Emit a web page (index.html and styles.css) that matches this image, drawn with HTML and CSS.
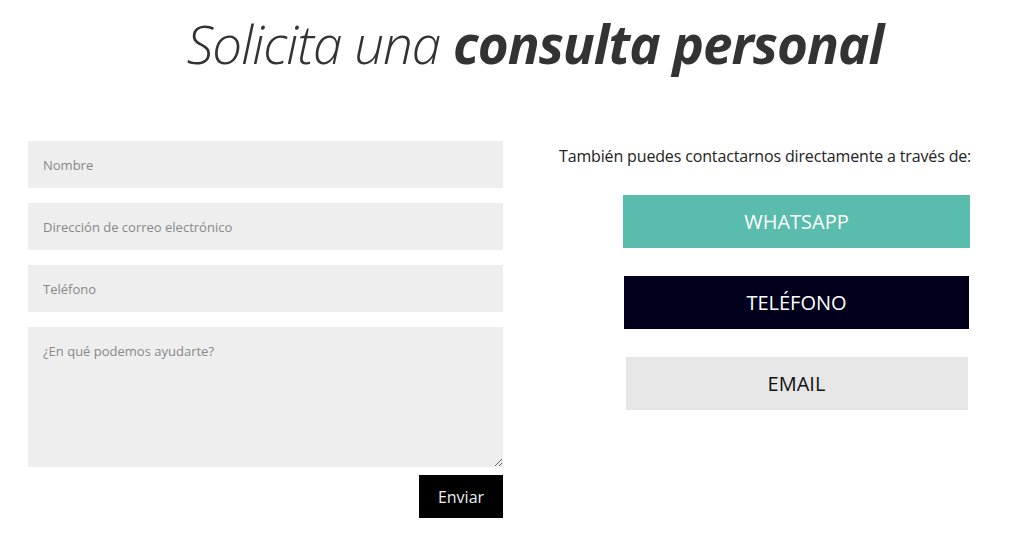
FILE: index.html
```html
<!DOCTYPE html>
<html lang="es">
<head>
<meta charset="utf-8">
<title>Solicita una consulta personal</title>
<link rel="stylesheet" href="styles.css">
</head>
<body>
<div class="page">
  <h1 class="title">Solicita una <strong>consulta personal</strong></h1>
  <div class="content">
    <form class="form">
      <input class="field" type="text" placeholder="Nombre">
      <input class="field" type="email" placeholder="Dirección de correo electrónico">
      <input class="field" type="tel" placeholder="Teléfono">
      <textarea class="field area" placeholder="¿En qué podemos ayudarte?"></textarea>
      <div class="actions"><button type="button" class="send">Enviar</button></div>
    </form>
    <div class="contact">
      <p class="lead">También puedes contactarnos directamente a través de:</p>
      <div class="buttons">
        <a class="btn btn-wa">WHATSAPP</a>
        <a class="btn btn-tel">TELÉFONO</a>
        <a class="btn btn-mail">EMAIL</a>
      </div>
    </div>
  </div>
</div>
</body>
</html>
```
FILE: styles.css
```css
html, body {
  margin: 0;
  padding: 0;
  background: #fff;
  overflow: hidden;
}
.page {
  width: 1024px;
  height: 545px;
  font-family: "Open Sans", "Noto Sans", sans-serif;
}
.title {
  margin: 0;
  padding: 10px 0 0 46px;
  text-align: center;
  font-family: "Open Sans", sans-serif;
  font-style: italic;
  font-weight: 300;
  font-size: 53px;
  line-height: 68px;
  letter-spacing: -1px;
  color: #333;
}
.title strong {
  font-weight: 700;
}
.content {
  display: flex;
  padding: 63px 0 0 28px;
  gap: 56px;
}
.form {
  flex: 0 0 475px;
  display: flex;
  flex-direction: column;
  gap: 15px;
}
.field {
  box-sizing: border-box;
  width: 475px;
  height: 47px;
  border: 0;
  margin: 0;
  padding: 0 15px;
  background: #eeeeee;
  font-family: "Open Sans", sans-serif;
  font-size: 13px;
  color: #555;
  outline: none;
}
.field::placeholder {
  color: #888;
  opacity: 1;
}
.area {
  height: 140px;
  padding: 15px 15px;
  resize: vertical;
  display: block;
  line-height: 18px;
}
.actions {
  display: flex;
  justify-content: flex-end;
  margin-top: -7px;
}
.send {
  width: 84px;
  height: 43px;
  border: 0;
  background: #000;
  color: #eee;
  font-family: "Open Sans", sans-serif;
  font-size: 16px;
  padding: 0;
  cursor: pointer;
}
.contact {
  flex: 0 0 475px;
  font-family: "Open Sans", sans-serif;
}
.lead {
  margin: 0;
  padding-top: 4px;
  font-size: 16px;
  line-height: 22px;
  letter-spacing: -0.15px;
  color: #222;
}
.buttons {
  display: flex;
  flex-direction: column;
  align-items: center;
  padding-top: 28px;
  gap: 28px;
}
.btn {
  display: flex;
  align-items: center;
  justify-content: center;
  height: 53px;
  font-size: 20px;
  text-decoration: none;
}
.btn-wa {
  width: 347px;
  background: #59bcad;
  color: #fff;
}
.btn-tel {
  width: 345px;
  background: #00001c;
  color: #fff;
}
.btn-mail {
  width: 342px;
  background: #e6e6e6;
  color: #111;
}
```
